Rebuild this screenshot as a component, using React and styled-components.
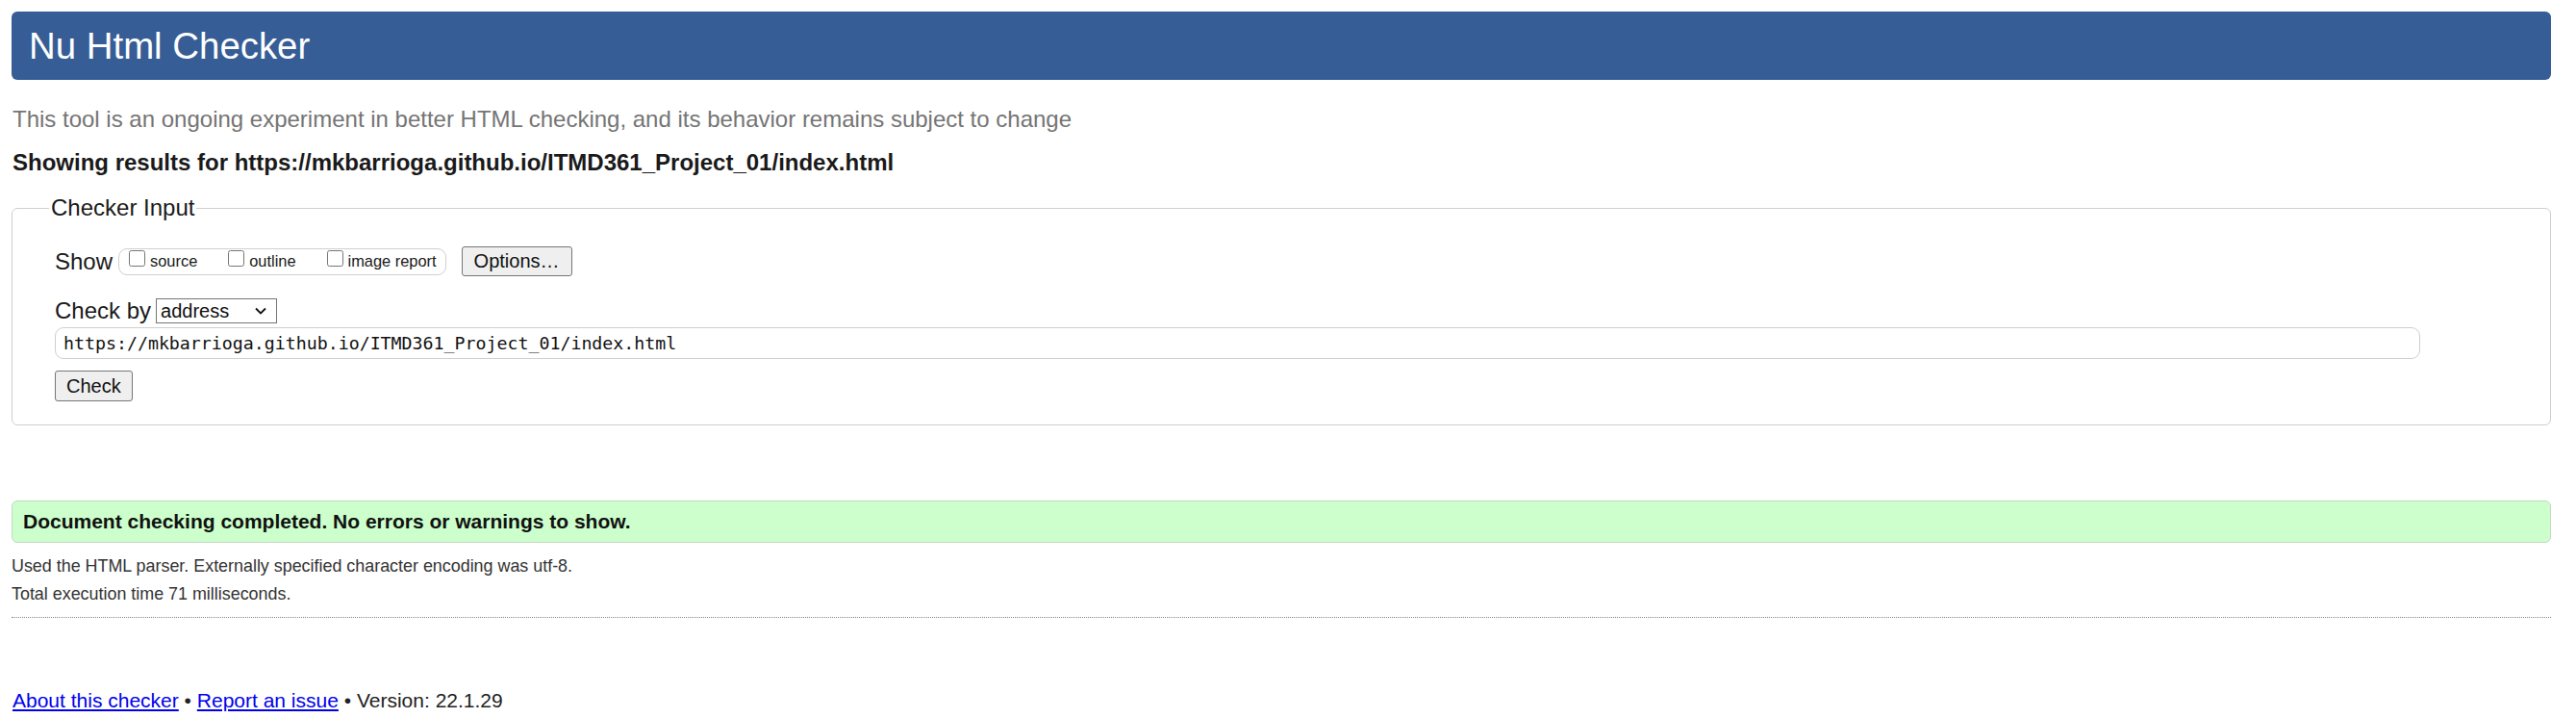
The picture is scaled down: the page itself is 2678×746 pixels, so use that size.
import styled, { createGlobalStyle } from 'styled-components';

const GlobalStyle = createGlobalStyle`
  body {
    margin: 12px 26px 0 12px;
    font-family: "Liberation Sans", Arial, sans-serif;
    color: #222;
    background: #fff;
  }
`

const Header = styled.h1`
  margin: 0;
  height: 71px;
  display: flex;
  align-items: center;
  padding: 0 18px;
  background: #365d95;
  color: #fff;
  border-radius: 6px;
  font-size: 38.4px;
  font-weight: normal;
`

const Intro = styled.p`
  margin: 27px 0 0 1px;
  font-size: 24px;
  line-height: 28px;
  color: #757575;
`

const Showing = styled.p`
  margin: 17px 0 0 1px;
  font-size: 24px;
  line-height: 28px;
  font-weight: bold;
  color: #1a1a1a;
`

const Fieldset = styled.fieldset`
  margin: 19px 0 0;
  padding: 26px 44px 24px;
  border: 1px solid #cfcfcf;
  border-radius: 6px;
`

const Legend = styled.legend`
  margin-left: -6px;
  padding: 0 2px;
  font-size: 24px;
  line-height: 28px;
  color: #1a1a1a;
`

const Row = styled.div`
  display: flex;
  align-items: center;
  margin-top: ${(props) => props.$gap || 0}px;
`

const Label = styled.span`
  font-size: 24px;
  line-height: 28px;
  color: #1a1a1a;
  margin-right: ${(props) => props.$space || 6}px;
`

const CheckGroup = styled.div`
  display: flex;
  align-items: center;
  height: 26px;
  padding: 0 9px 0 10px;
  border: 1px solid #d0d0d0;
  border-radius: 9px;
  gap: 32px;
`

const CheckItem = styled.label`
  display: flex;
  align-items: center;
  font-size: 16.4px;
  color: #1a1a1a;
  input {
    width: 17px;
    height: 17px;
    margin: 0 5px 0 0;
    position: relative;
    top: -3px;
  }
`

const Button = styled.button`
  font-family: "Liberation Sans", Arial, sans-serif;
  font-size: 20px;
  color: #111;
  background: #efefef;
  border: 1px solid #767676;
  border-radius: 3px;
  height: ${(props) => props.$h || 32}px;
  padding: 0 ${(props) => props.$px || 12}px;
  margin-left: ${(props) => props.$ml || 0}px;
`

const SelectWrap = styled.span`
  position: relative;
  display: inline-block;
  svg {
    position: absolute;
    right: 11px;
    top: 9px;
    pointer-events: none;
  }
`

const Select = styled.select`
  appearance: none;
  width: 126px;
  height: 26px;
  padding: 0 0 0 4px;
  font-family: "Liberation Sans", Arial, sans-serif;
  font-size: 20px;
  color: #111;
  background: #fff;
  border: 1px solid #767676;
  border-radius: 0;
`

const UrlInput = styled.input`
  box-sizing: border-box;
  width: 2459px;
  height: 33px;
  padding: 0 8px;
  border: 1px solid #cfcfcf;
  border-radius: 9px;
  font-family: "DejaVu Sans Mono", "Liberation Mono", monospace;
  font-size: 18.25px;
  color: #111;
`

const Success = styled.div`
  margin-top: 78px;
  height: 42px;
  display: flex;
  align-items: center;
  padding-left: 11px;
  background: #ccffcc;
  border: 1px solid #c4d8c4;
  border-radius: 6px;
  font-size: 21px;
  font-weight: bold;
  color: #111;
`

const Note = styled.p`
  margin: ${(props) => props.$top}px 0 0;
  font-size: 17.9px;
  line-height: 22px;
  color: #333;
`

const Rule = styled.hr`
  margin: 13px 0 0;
  border: 0;
  border-top: 1px dotted #888;
  height: 0;
`

const Footer = styled.p`
  margin: 74px 0 0 1px;
  font-size: 21px;
  line-height: 24px;
  color: #222;
  a {
    color: #0000ee;
  }
`

const Chevron = () => (
  <svg width="12" height="8" viewBox="0 0 12 8">
    <path d="M1 1.5 L6 6.5 L11 1.5" fill="none" stroke="#111" strokeWidth="1.8" />
  </svg>
)

const url = 'https://mkbarrioga.github.io/ITMD361_Project_01/index.html'

const App = () => {
  return (
    <>
      <GlobalStyle />
      <Header>Nu Html Checker</Header>
      <Intro>This tool is an ongoing experiment in better HTML checking, and its behavior remains subject to change</Intro>
      <Showing>Showing results for {url}</Showing>
      <form onSubmit={(e) => e.preventDefault()}>
        <Fieldset>
          <Legend>Checker Input</Legend>
          <Row>
            <Label>Show</Label>
            <CheckGroup>
              {/* checkboxes for the extra reports */}
              <CheckItem><input type="checkbox" />source</CheckItem>
              <CheckItem><input type="checkbox" />outline</CheckItem>
              <CheckItem><input type="checkbox" />image report</CheckItem>
            </CheckGroup>
            <Button type="button" $ml={16} $h={31}>Options…</Button>
          </Row>
          <Row $gap={22}>
            <Label $space={5}>Check by</Label>
            <SelectWrap>
              <Select defaultValue="address">
                <option value="address">address</option>
                <option value="file">file upload</option>
                <option value="text">text input</option>
              </Select>
              <Chevron />
            </SelectWrap>
          </Row>
          <Row $gap={3}>
            <UrlInput type="url" defaultValue={url} />
          </Row>
          <Row $gap={12}>
            <Button type="submit" $px={11}>Check</Button>
          </Row>
        </Fieldset>
      </form>
      <Success>Document checking completed. No errors or warnings to show.</Success>
      <Note $top={13}>Used the HTML parser. Externally specified character encoding was utf-8.</Note>
      <Note $top={7}>Total execution time 71 milliseconds.</Note>
      <Rule />
      <Footer>
        <a href="#about">About this checker</a> • <a href="#issue">Report an issue</a> • Version: 22.1.29
      </Footer>
    </>
  )
}

export default App
